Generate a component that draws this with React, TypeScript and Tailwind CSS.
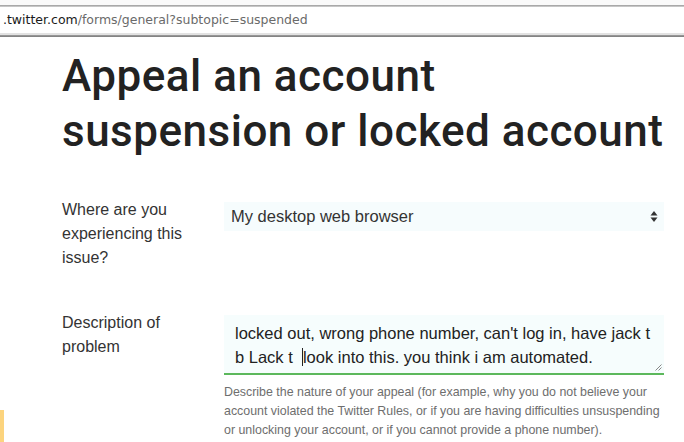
export default function App() {
  return (
    <div className="relative h-[442px] w-[684px] overflow-hidden bg-white font-['Liberation_Sans',Arial,sans-serif] text-[#2b2b2b]">
      {/* address bar strip */}
      <div className="h-[5px] bg-[#fafafa]" />
      <div className="h-[2px] bg-gradient-to-b from-[#9a9a9a] to-[#d6d6d6]" />
      <div className="flex h-[26px] items-center overflow-hidden bg-white pl-[3px] text-[12.5px] leading-none text-[#6a6a6a] font-['DejaVu_Sans',sans-serif]">
        <span className="text-[#1a1a1a]">.twitter.com</span>
        <span>/forms/general?subtopic=suspended</span>
      </div>
      <div className="h-[2px] bg-[#e2e2e2]" />
      <div className="h-[2px] bg-gradient-to-b from-[#a0a0a0] to-[#7a7a7a]" />

      <div className="pl-[62px]">
        <h1 className="mt-[12px] whitespace-nowrap text-[44px] font-medium leading-[55px] tracking-[0.5px] text-[#222] font-['Roboto',sans-serif]">
          Appeal an account
          <br />
          suspension or locked account
        </h1>

        <div className="mt-[39px] flex">
          <div className="w-[162px] shrink-0 text-[16px] leading-[24px] text-[#333]">
            Where are you
            <br />
            experiencing this
            <br />
            issue?
          </div>
          <div className="mt-[4px] flex h-[29px] w-[440px] shrink-0 items-center justify-between bg-[#f6fcfd] pl-[7px] pr-[6px] text-[16.5px] text-[#333]">
            <span>My desktop web browser</span>
            <svg width="8" height="13" viewBox="0 0 8 13" className="text-[#333]">
              <path d="M4 1 L7.5 5.5 H0.5 Z" fill="currentColor" />
              <path d="M4 12 L7.5 7.5 H0.5 Z" fill="currentColor" />
            </svg>
          </div>
        </div>

        <div className="mt-[41px] flex">
          <div className="w-[162px] shrink-0 text-[16px] leading-[24px] text-[#333]">
            Description of
            <br />
            problem
          </div>
          <div className="mt-[4px] w-[440px] shrink-0">
            <div className="relative h-[60px] w-[440px] border-b-2 border-[#5cb85c] bg-[#f6fdfd] pl-[11px] pt-[6px] text-[16.5px] leading-[24px] text-[#222]">
              <div className="whitespace-nowrap">locked out, wrong phone number, can't log in, have jack t</div>
              <div className="flex items-center whitespace-nowrap">
                <span className="whitespace-pre">b Lack t  </span>
                <span className="inline-block h-[18px] w-px bg-[#222]" />
                <span>look into this. you think i am automated.</span>
              </div>
              <svg width="7" height="7" viewBox="0 0 7 7" className="absolute bottom-[2px] right-[2px]">
                <path d="M6.5 0.5 L0.5 6.5 M6.5 3.5 L3.5 6.5" stroke="#888" strokeWidth="1" />
              </svg>
            </div>
            <p className="mt-[8px] whitespace-nowrap text-[12.4px] leading-[19px] text-[#6e6e6e]">
              Describe the nature of your appeal (for example, why you do not believe your
              <br />
              account violated the Twitter Rules, or if you are having difficulties unsuspending
              <br />
              or unlocking your account, or if you cannot provide a phone number).
            </p>
          </div>
        </div>
      </div>

      {/* yellow strip bottom-left */}
      <div className="absolute bottom-0 left-0 h-[32px] w-[4px] bg-[#fcd47e]" />
    </div>
  );
}
